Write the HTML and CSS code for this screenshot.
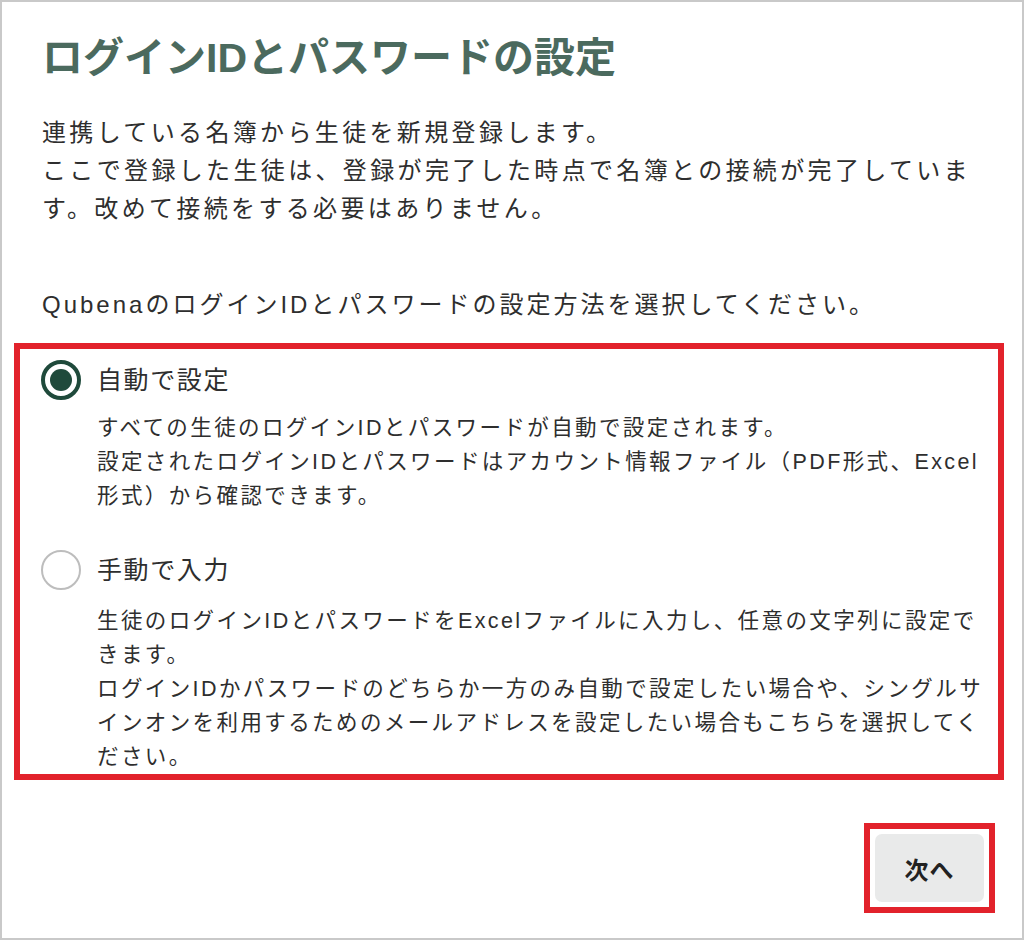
FILE: index.html
```html
<!DOCTYPE html>
<html lang="ja">
<head>
<meta charset="utf-8">
<title>ログインIDとパスワードの設定</title>
<link rel="stylesheet" href="styles.css">
</head>
<body>
<div class="frame">
  <h1 class="title">ログインIDとパスワードの設定</h1>
  <p class="lead">連携している名簿から生徒を新規登録します。<br>ここで登録した生徒は、登録が完了した時点で名簿との接続が完了しています。改めて接続をする必要はありません。</p>
  <p class="question">QubenaのログインIDとパスワードの設定方法を選択してください。</p>
  <div class="choices">
    <div class="option">
      <div class="option-head">
        <span class="radio radio-on"></span>
        <span class="option-label">自動で設定</span>
      </div>
      <p class="option-desc">すべての生徒のログインIDとパスワードが自動で設定されます。<br>設定されたログインIDとパスワードはアカウント情報ファイル（PDF形式、Excel形式）から確認できます。</p>
    </div>
    <div class="option option-second">
      <div class="option-head">
        <span class="radio"></span>
        <span class="option-label">手動で入力</span>
      </div>
      <p class="option-desc">生徒のログインIDとパスワードをExcelファイルに入力し、任意の文字列に設定できます。<br>ログインIDかパスワードのどちらか一方のみ自動で設定したい場合や、シングルサインオンを利用するためのメールアドレスを設定したい場合もこちらを選択してください。</p>
    </div>
  </div>
  <div class="actions">
    <div class="highlight">
      <button class="next-btn" type="button">次へ</button>
    </div>
  </div>
</div>
</body>
</html>
```
FILE: styles.css
```css
html, body {
  margin: 0;
  padding: 0;
  background: #ffffff;
}

body {
  font-family: "Liberation Sans", "Noto Sans CJK JP", sans-serif;
  color: #2e2e2e;
}

.frame {
  box-sizing: border-box;
  width: 1024px;
  height: 940px;
  border: 2px solid #c9c9c9;
  display: flex;
  flex-direction: column;
}

.title {
  margin: 31px 0 0 40px;
  font-size: 41px;
  line-height: 50px;
  font-weight: 700;
  color: #4b6a5e;
  letter-spacing: 0;
}

.lead {
  margin: 31px 0 0 40px;
  width: 940px;
  font-size: 24px;
  line-height: 38px;
  letter-spacing: 3.35px;
}

.question {
  margin: 58px 0 0 40px;
  font-size: 24px;
  line-height: 38px;
  letter-spacing: 3px;
}

.choices {
  margin: 19px 0 0 12px;
  width: 990px;
  box-sizing: border-box;
  border: 6px solid #e2222b;
  padding: 11px 10px 0 21px;
}

.option-second {
  margin-top: 37px;
}

.option-head {
  display: flex;
  align-items: center;
  gap: 16px;
  height: 40px;
}

.radio {
  box-sizing: border-box;
  width: 40px;
  height: 40px;
  border-radius: 50%;
  border: 2px solid #bdbdbd;
  flex: none;
  display: flex;
  align-items: center;
  justify-content: center;
}

.radio-on {
  border: 4px solid #1f4a3b;
}

.radio-on::after {
  content: "";
  width: 22px;
  height: 22px;
  border-radius: 50%;
  background: #1f4a3b;
}

.option-label {
  font-size: 25px;
  letter-spacing: 1.6px;
  line-height: 40px;
}

.option-desc {
  margin: 11px 0 0 56px;
  font-size: 21.5px;
  line-height: 34px;
  letter-spacing: 2.4px;
}

.option-second .option-desc {
  margin-top: 14px;
}

.actions {
  margin: 43px 27px 0 0;
  display: flex;
  justify-content: flex-end;
}

.highlight {
  border: 6px solid #e2222b;
  padding: 5px;
}

.next-btn {
  width: 109px;
  height: 68px;
  border: none;
  border-radius: 7px;
  background: #e9eaea;
  font-family: "Liberation Sans", "Noto Sans CJK JP", sans-serif;
  font-size: 24px;
  font-weight: 700;
  color: #222;
  letter-spacing: 1px;
}
```
